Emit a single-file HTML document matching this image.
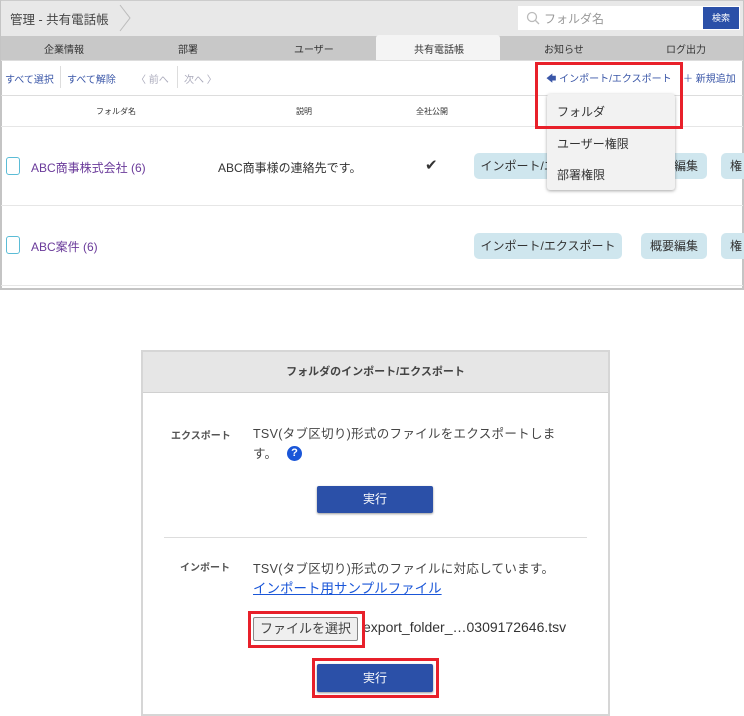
<!DOCTYPE html>
<html><head><meta charset="utf-8"><style>
*{margin:0;padding:0;box-sizing:border-box}
body{width:744px;height:715px;background:#fff;position:relative;overflow:hidden;font-family:"Liberation Sans","Noto Sans CJK JP",sans-serif;color:#333}
.a{position:absolute;white-space:nowrap}
.btn{position:absolute;background:#cfe6ee;border-radius:5px;font-size:12px;color:#333;text-align:center;line-height:26px;height:26px}
.cb{position:absolute;width:14px;height:18px;border:1.5px solid #5bbcd6;border-radius:3px}
.run{position:absolute;background:#2b50a8;color:#fff;font-size:12px;text-align:center;border-radius:2px;box-shadow:0 1px 2px #999}
.red{position:absolute;border:3px solid #e8202a}
</style></head><body>
<div class="a" style="left:0;top:0;width:744px;height:290px;border:2px solid #c4c4c4;border-top:1px solid #ccc"></div>
<div class="a" style="left:1px;top:1px;width:742px;height:35px;background:#e8e8e8"></div>
<div class="a" style="left:10px;top:9px;font-size:12.5px;color:#444">管理 - 共有電話帳</div>
<svg class="a" style="left:118px;top:4px" width="14" height="28"><path d="M2 1 L12 14 L2 27" fill="none" stroke="#bbb"/></svg>
<div class="a" style="left:518px;top:6px;width:222px;height:24px;background:#fff"></div>
<svg class="a" style="left:526px;top:11px" width="14" height="14"><circle cx="6" cy="6" r="4.5" fill="none" stroke="#bbb" stroke-width="1.3"/><path d="M9 9 L13 13" stroke="#bbb" stroke-width="1.3"/></svg>
<div class="a" style="left:544px;top:10px;font-size:12px;color:#999">フォルダ名</div>
<div class="a" style="left:703px;top:7px;width:36px;height:22px;background:#2b50a8;color:#fff;font-size:9px;text-align:center;line-height:22px">検索</div>
<div class="a" style="left:1px;top:36px;width:742px;height:24px;background:#c8c8c8"></div>
<div class="a" style="left:376px;top:35px;width:124px;height:25px;background:#f4f4f4;border-radius:3px 3px 0 0"></div>
<div class="a" style="left:0;top:41px;width:744px;font-size:10px;color:#333">
<span class="a" style="left:44px">企業情報</span><span class="a" style="left:178px">部署</span><span class="a" style="left:294px">ユーザー</span><span class="a" style="left:414px">共有電話帳</span><span class="a" style="left:544px">お知らせ</span><span class="a" style="left:666px">ログ出力</span></div>
<div class="a" style="left:1px;top:60px;width:742px;height:1px;background:#ddd"></div>
<div class="a" style="left:5px;top:71px;font-size:10px;color:#3b57a8">すべて選択</div>
<div class="a" style="left:60px;top:66px;width:1px;height:22px;background:#ddd"></div>
<div class="a" style="left:67px;top:71px;font-size:10px;color:#3b57a8">すべて解除</div>
<div class="a" style="left:136px;top:71px;font-size:10px;color:#aab">〈 前へ</div>
<div class="a" style="left:177px;top:66px;width:1px;height:22px;background:#ddd"></div>
<div class="a" style="left:184px;top:71px;font-size:10px;color:#aab">次へ 〉</div>
<div class="a" style="left:546px;top:70px;font-size:10px;color:#3b57a8">🡄 インポート/エクスポート</div>
<div class="a" style="left:683px;top:70px;font-size:10px;color:#3b57a8">＋ 新規追加</div>
<div class="a" style="left:1px;top:95px;width:742px;height:1px;background:#ddd"></div>
<div class="a" style="left:96px;top:106px;font-size:8px">フォルダ名</div>
<div class="a" style="left:296px;top:106px;font-size:8px">説明</div>
<div class="a" style="left:416px;top:106px;font-size:8px">全社公開</div>
<div class="a" style="left:1px;top:126px;width:742px;height:1px;background:#e6e6e6"></div>
<div class="cb" style="left:6px;top:157px"></div>
<div class="a" style="left:31px;top:159px;font-size:12px;color:#6a3a9a">ABC商事株式会社 (6)</div>
<div class="a" style="left:218px;top:159px;font-size:12px">ABC商事様の連絡先です。</div>
<div class="a" style="left:425px;top:156px;font-size:15px">✔</div>
<div class="btn" style="left:474px;top:153px;width:148px">インポート/エクスポート</div>
<div class="btn" style="left:641px;top:153px;width:66px">概要編集</div>
<div class="btn" style="left:721px;top:153px;width:30px">権</div>
<div class="a" style="left:1px;top:205px;width:742px;height:1px;background:#e6e6e6"></div>
<div class="cb" style="left:6px;top:236px"></div>
<div class="a" style="left:31px;top:238px;font-size:12px;color:#6a3a9a">ABC案件 (6)</div>
<div class="btn" style="left:474px;top:233px;width:148px">インポート/エクスポート</div>
<div class="btn" style="left:641px;top:233px;width:66px">概要編集</div>
<div class="btn" style="left:721px;top:233px;width:30px">権</div>
<div class="a" style="left:1px;top:285px;width:742px;height:1px;background:#e6e6e6"></div>
<div class="a" style="left:547px;top:94px;width:128px;height:96px;background:#f2f2f2;border-radius:3px;box-shadow:0 1px 3px rgba(0,0,0,.35)"></div>
<div class="a" style="left:557px;top:103px;font-size:12px;color:#333">フォルダ</div>
<div class="a" style="left:557px;top:135px;font-size:12px;color:#333">ユーザー権限</div>
<div class="a" style="left:557px;top:166px;font-size:12px;color:#333">部署権限</div>
<div class="red" style="left:535px;top:62px;width:148px;height:67px"></div>

<div class="a" style="left:141px;top:350px;width:469px;height:366px;border:2px solid #d6d6d6"></div>
<div class="a" style="left:143px;top:352px;width:465px;height:41px;background:#e6e6e6;border-bottom:1px solid #d0d0d0"></div>
<div class="a" style="left:143px;top:363px;width:465px;text-align:center;font-size:11px;font-weight:bold;color:#444">フォルダのインポート/エクスポート</div>
<div class="a" style="left:171px;top:427px;font-size:10px;font-weight:bold;color:#555">エクスポート</div>
<div class="a" style="left:253px;top:424px;font-size:12.5px;line-height:20px;color:#444;letter-spacing:0.3px">TSV(タブ区切り)形式のファイルをエクスポートしま<br>す。</div>
<div class="a" style="left:287px;top:446px;width:15px;height:15px;border-radius:50%;background:#1a56d8;color:#fff;font-size:11px;font-weight:bold;text-align:center;line-height:15px">?</div>
<div class="run" style="left:317px;top:486px;width:116px;height:27px;line-height:27px">実行</div>
<div class="a" style="left:164px;top:537px;width:423px;height:1px;background:#ddd"></div>
<div class="a" style="left:180px;top:559px;font-size:10px;font-weight:bold;color:#555">インポート</div>
<div class="a" style="left:253px;top:558px;font-size:12.5px;color:#444;letter-spacing:0.3px">TSV(タブ区切り)形式のファイルに対応しています。</div>
<div class="a" style="left:253px;top:577px;font-size:13.5px;color:#1a56d8;text-decoration:underline">インポート用サンプルファイル</div>
<div class="a" style="left:253px;top:617px;width:105px;height:24px;background:#efefef;border:1px solid #888;border-radius:2px;font-size:13px;text-align:center;line-height:22px;color:#444">ファイルを選択</div>
<div class="a" style="left:363px;top:619px;font-size:14px;color:#333">export_folder_…0309172646.tsv</div>
<div class="red" style="left:248px;top:611px;width:117px;height:37px"></div>
<div class="run" style="left:317px;top:664px;width:116px;height:28px;line-height:28px">実行</div>
<div class="red" style="left:312px;top:658px;width:127px;height:40px"></div>
</body></html>
